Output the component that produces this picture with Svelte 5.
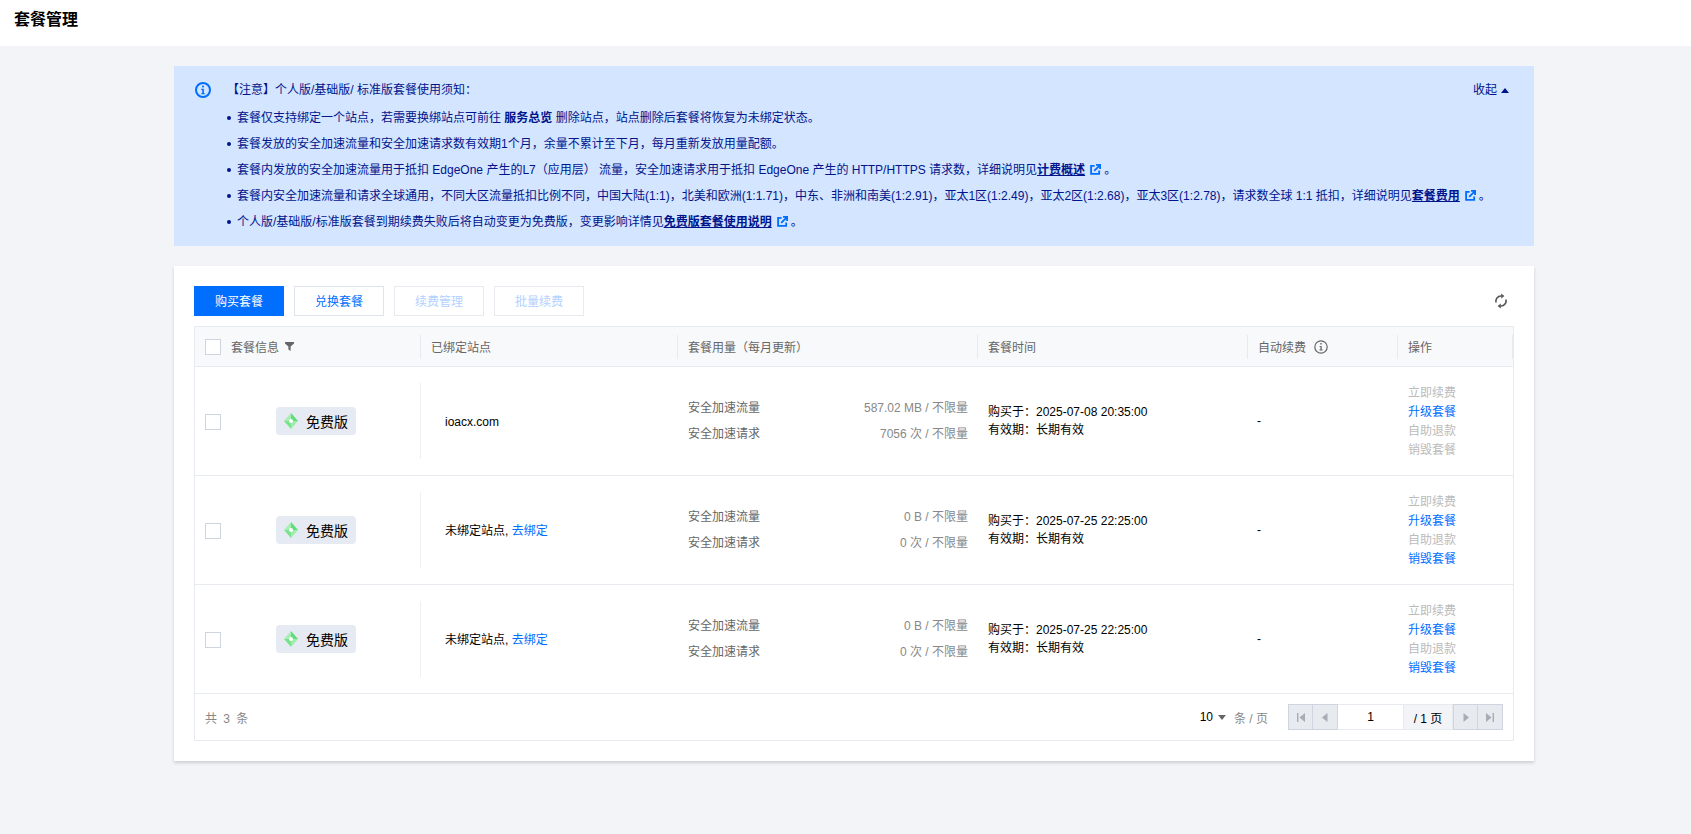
<script lang="ts">
	const rows = [
		{ site: 'ioacx.com', flow: '587.02 MB', req: '7056 次', bought: '2025-07-08 20:35:00', destroy: false },
		{ site: '', flow: '0 B', req: '0 次', bought: '2025-07-25 22:25:00', destroy: true },
		{ site: '', flow: '0 B', req: '0 次', bought: '2025-07-25 22:25:00', destroy: true }
	];
</script>

{#snippet ext()}
	<svg class="ext" width="11" height="11" viewBox="0 0 12 12" fill="none" stroke="#006eff" stroke-width="2">
		<path d="M5 2H1.2v8.8H10V7" />
		<path d="M4.6 7.4 10 2M6.6 1h4.4v4.4" />
	</svg>
{/snippet}

<header class="topbar">套餐管理</header>

<main class="page">
	<section class="notice">
		<svg class="notice-icon" width="16" height="16" viewBox="0 0 16 16" fill="none">
			<circle cx="8" cy="8" r="7" stroke="#006eff" stroke-width="2" />
			<rect x="7.1" y="3.6" width="1.8" height="1.8" fill="#006eff" />
			<path d="M6.2 6.8h2.7v4.4h1v1.1H6.2v-1.1h1.1V7.9H6.2z" fill="#006eff" />
		</svg>
		<div class="notice-body">
			<div class="notice-title">
				<span>【注意】个人版/基础版/ 标准版套餐使用须知：</span>
				<span class="collapse">收起<i class="caret-up"></i></span>
			</div>
			<ul>
				<li>套餐仅支持绑定一个站点，若需要换绑站点可前往 <b>服务总览</b> 删除站点，站点删除后套餐将恢复为未绑定状态。</li>
				<li>套餐发放的安全加速流量和安全加速请求数有效期1个月，余量不累计至下月，每月重新发放用量配额。</li>
				<li>套餐内发放的安全加速流量用于抵扣 EdgeOne 产生的L7（应用层） 流量，安全加速请求用于抵扣 EdgeOne 产生的 HTTP/HTTPS 请求数，详细说明见<a href="#a">计费概述</a>{@render ext()}。</li>
				<li>套餐内安全加速流量和请求全球通用，不同大区流量抵扣比例不同，中国大陆(1:1)，北美和欧洲(1:1.71)，中东、非洲和南美(1:2.91)，亚太1区(1:2.49)，亚太2区(1:2.68)，亚太3区(1:2.78)，请求数全球 1:1 抵扣，详细说明见<a href="#a">套餐费用</a>{@render ext()}。</li>
				<li>个人版/基础版/标准版套餐到期续费失败后将自动变更为免费版，变更影响详情见<a href="#a">免费版套餐使用说明</a>{@render ext()}。</li>
			</ul>
		</div>
	</section>

	<section class="card">
		<div class="toolbar">
			<button class="btn primary">购买套餐</button>
			<button class="btn">兑换套餐</button>
			<button class="btn off">续费管理</button>
			<button class="btn off">批量续费</button>
			<svg class="refresh" width="12" height="16" viewBox="0 0 12 16" fill="none" stroke="#555" stroke-width="1.6">
				<path d="M1.2 9.6A5 5 0 0 1 6.4 3" />
				<path d="M10.8 6.4A5 5 0 0 1 5.6 13" />
				<path d="M6.2.6 9.4 3 6.2 5.4z" fill="#555" stroke="none" />
				<path d="M5.8 15.4 2.6 13l3.2-2.4z" fill="#555" stroke="none" />
			</svg>
		</div>

		<div class="table">
			<div class="thead grid">
				<div class="th first">
					<span class="check"></span>
					<span>套餐信息</span>
					<svg width="9" height="9" viewBox="0 0 9 9" fill="#666"><path d="M0 0h9v1.4L5.6 4.6V9L3.4 7.6v-3L0 1.4z" /></svg>
				</div>
				<div class="th">已绑定站点</div>
				<div class="th">套餐用量（每月更新）</div>
				<div class="th">套餐时间</div>
				<div class="th">
					<span>自动续费</span>
					<svg class="th-info" width="14" height="14" viewBox="0 0 14 14" fill="none">
						<circle cx="7" cy="7" r="6.2" stroke="#666" stroke-width="1.2" />
						<rect x="6.3" y="3" width="1.4" height="1.5" fill="#666" />
						<path d="M5.5 5.9h2.2v3.7h.9v.9H5.5v-.9h.9V6.8h-.9z" fill="#666" />
					</svg>
				</div>
				<div class="th last">操作</div>
			</div>

			{#each rows as row}
				<div class="tr grid">
					<div class="td plan">
						<span class="check"></span>
						<span class="badge">
							<svg width="14" height="16" viewBox="0 0 14 16">
								<path d="M7 0 14 8H7z" fill="#5fdc7c" />
								<path d="M7 0 0 8h7z" fill="#a8eeb2" />
								<path d="M0 8h7v8z" fill="#78e28e" />
								<path d="M14 8H7v8z" fill="#a0ecaa" />
								<circle cx="7" cy="8" r="2" fill="#fff" />
							</svg>
							免费版
						</span>
					</div>
					<div class="td site">
						{#if row.site}
							<span>{row.site}</span>
						{:else}
							<span class="unbound">未绑定站点, <a href="#b">去绑定</a></span>
						{/if}
					</div>
					<div class="td usage">
						<div class="usage-line"><span>安全加速流量</span><span>{row.flow} / 不限量</span></div>
						<div class="usage-line"><span>安全加速请求</span><span>{row.req} / 不限量</span></div>
					</div>
					<div class="td time">
						<div>购买于：{row.bought}</div>
						<div>有效期：长期有效</div>
					</div>
					<div class="td renew">-</div>
					<div class="td ops">
						<span class="dim">立即续费</span>
						<a href="#c">升级套餐</a>
						<span class="dim">自助退款</span>
						{#if row.destroy}
							<a href="#c">销毁套餐</a>
						{:else}
							<span class="dim">销毁套餐</span>
						{/if}
					</div>
				</div>
			{/each}

			<div class="tfoot">
				<span class="total">共 3 条</span>
				<span class="size">10<i class="caret-down"></i></span>
				<span class="per">条 / 页</span>
				<div class="pager">
					<span class="pg"><svg width="8" height="9" viewBox="0 0 8 9" fill="#a8adb5"><path d="M0 0h1.4v9H0zM8 0v9L2.4 4.5z" /></svg></span>
					<span class="pg"><svg width="8" height="9" viewBox="0 0 8 9" fill="#a8adb5"><path d="M6.5 0v9L1 4.5z" /></svg></span>
					<span class="pg-input">1</span>
					<span class="pg-total">/ 1 页</span>
					<span class="pg"><svg width="8" height="9" viewBox="0 0 8 9" fill="#a8adb5"><path d="M1.5 0v9L7 4.5z" /></svg></span>
					<span class="pg"><svg width="8" height="9" viewBox="0 0 8 9" fill="#a8adb5"><path d="M8 0H6.6v9H8zM0 0v9l5.6-4.5z" /></svg></span>
				</div>
			</div>
		</div>
	</section>
</main>

<style>
	:global(body) {
		background: #f3f4f7;
		font-family: "Liberation Sans", "Noto Sans CJK SC", sans-serif;
		font-size: 12px;
		color: #000;
		height: 834px;
		overflow: hidden;
	}

	a {
		text-decoration: none;
		color: #006eff;
	}

	i {
		display: inline-block;
	}

	.topbar {
		height: 46px;
		box-sizing: border-box;
		padding: 9px 14px 0;
		background: #fff;
		font-size: 16px;
		font-weight: 700;
		line-height: 22px;
	}

	.page {
		margin: 20px 157px 0 174px;
	}

	.notice {
		display: flex;
		height: 180px;
		box-sizing: border-box;
		padding: 16px 25px 0 21px;
		background: #d4e5ff;
		color: #00148c;
		line-height: 16px;
	}

	.notice-icon {
		flex-shrink: 0;
		margin-right: 16px;
	}

	.notice-body {
		flex: 1;
	}

	.notice-title {
		display: flex;
		justify-content: space-between;
	}

	.collapse {
		display: inline-flex;
		align-items: center;
		gap: 4px;
	}

	.caret-up {
		width: 0;
		height: 0;
		border: 4px solid transparent;
		border-top: 0;
		border-bottom: 5px solid #00148c;
	}

	ul {
		margin: 12px 0 0;
		padding: 0;
		list-style: none;
	}

	li {
		position: relative;
		height: 16px;
		padding-left: 10px;
		margin-bottom: 10px;
		white-space: nowrap;
	}

	li::before {
		content: "";
		position: absolute;
		left: 0;
		top: 6px;
		width: 4px;
		height: 4px;
		border-radius: 50%;
		background: #00148c;
	}

	li a {
		color: #00148c;
		font-weight: 700;
		text-decoration: underline;
	}

	.ext {
		margin: 0 3px 0 5px;
		vertical-align: -1px;
	}

	.card {
		margin-top: 20px;
		height: 495px;
		box-sizing: border-box;
		padding: 20px;
		background: #fff;
		box-shadow: 0 2px 3px rgba(54, 58, 80, 0.2);
	}

	.toolbar {
		display: flex;
		align-items: center;
		gap: 10px;
		height: 30px;
		margin-bottom: 10px;
	}

	.btn {
		width: 90px;
		height: 30px;
		padding: 0 0 2px;
		border: 1px solid #dfe3ea;
		background: #fff;
		color: #006eff;
		font: inherit;
	}

	.btn.primary {
		background: #006eff;
		border-color: #006eff;
		color: #fff;
	}

	.btn.off {
		color: #b3d1ff;
		border-color: #e7eaef;
	}

	.refresh {
		margin-left: auto;
		margin-right: 7px;
	}

	.table {
		border: 1px solid #e7eaef;
	}

	.grid {
		display: grid;
		grid-template-columns: 226px 257px 300px 270px 150px 1fr;
	}

	.thead {
		height: 39px;
		background: #f8f9fb;
		border-bottom: 1px solid #e7eaef;
		color: #666;
		align-items: center;
	}

	.th {
		display: flex;
		align-items: center;
		height: 24px;
		padding-left: 10px;
		border-right: 1px solid #e7eaef;
	}

	.th.first {
		gap: 10px;
	}

	.th.first svg {
		margin-left: -4px;
	}

	.th-info {
		margin-left: 8px;
	}

	.check {
		display: block;
		flex-shrink: 0;
		width: 14px;
		height: 14px;
		border: 1px solid #cfd5de;
		background: #fff;
	}

	.plan .check {
		margin-top: 2px;
	}

	.tr {
		height: 109px;
		box-sizing: border-box;
		border-bottom: 1px solid #e7eaef;
		padding: 16px 0;
		grid-auto-rows: 76px;
		align-items: stretch;
	}

	.td {
		display: flex;
		align-items: center;
		min-width: 0;
		min-height: 0;
	}

	.plan {
		padding-left: 10px;
		border-right: 1px solid #eef0f3;
	}

	.badge {
		display: inline-flex;
		align-items: center;
		gap: 8px;
		box-sizing: border-box;
		width: 80px;
		height: 28px;
		margin-left: 55px;
		padding-left: 8px;
		border-radius: 4px;
		background: #e6eaf2;
		font-size: 14px;
	}

	.site {
		padding-left: 24px;
		padding-top: 2px;
	}

	.unbound {
		margin-top: -4px;
	}

	.usage {
		flex-direction: column;
		justify-content: center;
		gap: 10px;
		padding: 0 10px;
		color: #666;
	}

	.usage-line {
		display: flex;
		justify-content: space-between;
		width: 100%;
		line-height: 16px;
	}

	.usage-line span:last-child {
		color: #888;
	}

	.time {
		flex-direction: column;
		align-items: flex-start;
		justify-content: center;
		padding-left: 10px;
		line-height: 18px;
	}

	.renew {
		padding-left: 9px;
	}

	.ops {
		flex-direction: column;
		align-items: flex-start;
		justify-content: center;
		padding: 2px 0 0 10px;
		line-height: 19px;
	}

	.dim {
		color: #bbb;
	}

	.tfoot {
		display: flex;
		align-items: center;
		height: 46px;
		padding: 0 10px;
		color: #888;
	}

	.total {
		margin-right: auto;
		word-spacing: 3px;
	}

	.size {
		display: inline-flex;
		align-items: center;
		gap: 5px;
		color: #000;
	}

	.caret-down {
		width: 0;
		height: 0;
		border: 4px solid transparent;
		border-bottom: 0;
		border-top: 5px solid #666;
	}

	.per {
		margin: 0 20px 0 8px;
	}

	.pager {
		display: flex;
		height: 26px;
		color: #000;
	}

	.pg {
		display: flex;
		align-items: center;
		justify-content: center;
		box-sizing: border-box;
		width: 25px;
		border: 1px solid #cfd5de;
		background: #e7eaef;
	}

	.pg + .pg {
		border-left: 0;
	}

	.pg-input {
		display: flex;
		align-items: center;
		justify-content: center;
		box-sizing: border-box;
		width: 65px;
		border: 1px solid #e7eaef;
		border-left: 0;
		border-right: 0;
	}

	.pg-total {
		display: flex;
		align-items: center;
		justify-content: center;
		box-sizing: border-box;
		width: 50px;
		border: 1px solid #e7eaef;
		background: #f3f4f7;
	}
</style>
